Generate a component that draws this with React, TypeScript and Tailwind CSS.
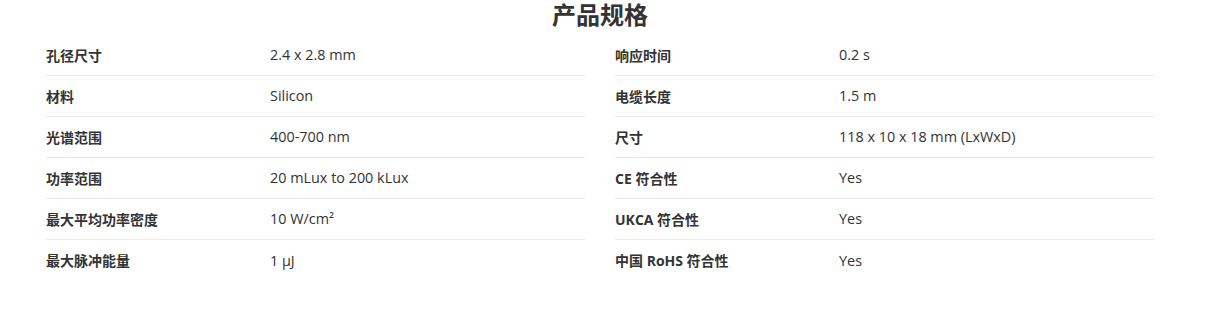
const LEFT = [
  { k: "孔径尺寸", v: "2.4 x 2.8 mm" },
  { k: "材料", v: "Silicon" },
  { k: "光谱范围", v: "400-700 nm" },
  { k: "功率范围", v: "20 mLux to 200 kLux" },
  { k: "最大平均功率密度", v: "10 W/cm²" },
  { k: "最大脉冲能量", v: "1 µJ" },
];

const RIGHT = [
  { k: "响应时间", v: "0.2 s" },
  { k: "电缆长度", v: "1.5 m" },
  { k: "尺寸", v: "118 x 10 x 18 mm (LxWxD)" },
  { k: "CE 符合性", v: "Yes" },
  { k: "UKCA 符合性", v: "Yes" },
  { k: "中国 RoHS 符合性", v: "Yes" },
];

function SpecCol({ rows }: { rows: { k: string; v: string }[] }) {
  return (
    <div className="flex flex-col">
      {rows.map((r, i) => (
        <div
          key={r.k}
          className={"flex items-center h-[41px] " + (i < rows.length - 1 ? "border-b border-[#ebebeb]" : "")}
        >
          <div className="w-[224px] shrink-0 font-bold text-[14px]">{r.k}</div>
          <div className="text-[14.4px]">{r.v}</div>
        </div>
      ))}
    </div>
  );
}

export default function App() {
  return (
    <div
      className="w-[1207px] h-[315px] bg-white text-[#333] text-[14px]"
      style={{ fontFamily: '"Open Sans", "Noto Sans CJK SC", sans-serif' }}
    >
      <div className="ml-[46px] w-[1108px]">
        <h1 className="text-center text-[24px] font-bold leading-[30px] h-[35px]">产品规格</h1>
        <div className="grid grid-cols-2 gap-x-[30px]">
          <SpecCol rows={LEFT} />
          <SpecCol rows={RIGHT} />
        </div>
      </div>
    </div>
  );
}
